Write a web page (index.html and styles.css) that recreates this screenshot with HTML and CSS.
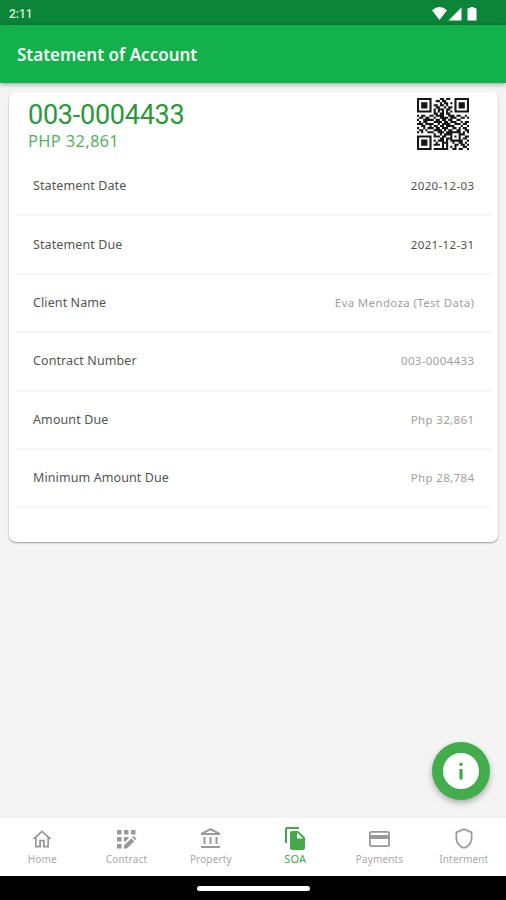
FILE: index.html
```html
<!DOCTYPE html>
<html lang="en">
<head>
<meta charset="utf-8">
<title>Statement of Account</title>
<link rel="stylesheet" href="styles.css">
</head>
<body>
<div class="screen">
  <div class="status">
    <span class="clock">2:11</span>
    <svg class="status-icons" width="46" height="16" viewBox="0 0 46 16" fill="#fff">
      <path d="M0 4.2Q7.5 -2 15 4.2L7.500 14Z"/>
      <path d="M16.500 14.500L29.500 1.500V14.500Z"/>
      <path d="M38 1h4v1.300h2.500V14.500h-9V2.300H38Z"/>
    </svg>
  </div>
  <header class="appbar"><h1>Statement of Account</h1></header>
  <main class="content">
    <section class="card">
      <div class="summary">
        <div>
          <div class="account">003-0004433</div>
          <div class="total">PHP 32,861</div>
        </div>
        <svg class="qr" width="52" height="52" viewBox="0 0 25 25" aria-label="QR code"><path id="modules"/></svg>
      </div>
      <div class="rows">
        <div class="row dark"><span class="label">Statement Date</span><span class="value">2020-12-03</span></div>
        <div class="row dark"><span class="label">Statement Due</span><span class="value">2021-12-31</span></div>
        <div class="row"><span class="label">Client Name</span><span class="value">Eva Mendoza (Test Data)</span></div>
        <div class="row"><span class="label">Contract Number</span><span class="value">003-0004433</span></div>
        <div class="row"><span class="label">Amount Due</span><span class="value">Php 32,861</span></div>
        <div class="row"><span class="label">Minimum Amount Due</span><span class="value">Php 28,784</span></div>
      </div>
    </section>
    <button class="fab" aria-label="Information">
      <svg width="36" height="36" viewBox="0 0 36 36"><circle cx="18" cy="18" r="18" fill="#fff"/><circle cx="18" cy="11.200" r="1.800" fill="#43a94a"/><path d="M16.400 16h3.200v10.500h-3.200z" fill="#43a94a"/></svg>
    </button>
  </main>
  <nav class="tabs">
    <a class="tab"><svg viewBox="1 1 22 22"><path d="M12 3.200L2.200 12H5v8.500h6v-6h2v6h6V12h2.800zM12 5.600l5.300 4.800v8.400h-2.500v-6H9.200v6H6.700v-8.400z"/></svg><span>Home</span></a>
    <a class="tab"><svg viewBox="1 1 22 22"><path d="M3 3h4.500v4.500H3zM10 3h4.500v4.500H10zM17 3h4.500v4.500H17zM3 10h4.500v4.500H3zM3 17h4.500v4.500H3zM10 10h4.500v1.500l-3 3H10zM10 21.500v-3l7.300-7.300 3 3-7.300 7.300zM18.200 10.300l1-1q.5-.5 1 0l1.900 1.900q.5.5 0 1l-1 1z"/></svg><span>Contract</span></a>
    <a class="tab"><svg class="large" viewBox="0 0 24 24"><path d="M6.500 10h-2v7h2v-7zm6 0h-2v7h2v-7zm8.500 9H2v2h19v-2zm-2.500-9h-2v7h2v-7zm-7-6.740L16.710 6H6.290l5.210-2.740m0-2.260L2 6v2h19V6l-9.500-5z"/></svg><span>Property</span></a>
    <a class="tab active"><svg class="large" viewBox="0 0 24 24"><path d="M16 0H4C2.900 0 2 .9 2 2v14h2V2h12zM15 4l7 6.500V21q0 2-2 2H9q-2 0-2-2V6q0-2 2-2zm-1 7.500h6L14 5.500z"/></svg><span>SOA</span></a>
    <a class="tab"><svg class="large" viewBox="0 0 24 24"><path d="M20.500 4h-16C3 4 2 4.900 2 6v12c0 1.100 1 2 2.500 2h16c1.500 0 2.500-.9 2.500-2V6c0-1.100-1-2-2.500-2zm.7 14.300H3.800V12h17.400zm0-10.300H3.800V5.700h17.400z"/></svg><span>Payments</span></a>
    <a class="tab"><svg class="large" viewBox="0 0 24 24"><path d="M12 1.200L3.500 4.700v6c0 5.300 3.600 9.800 8.500 11.100 4.900-1.300 8.500-5.800 8.500-11.100v-6zM12 3.100l6.800 2.800v4.800c0 4.300-2.900 8.100-6.800 9.300-3.900-1.200-6.800-5-6.800-9.300V5.900z"/></svg><span>Interment</span></a>
  </nav>
  <div class="gesture"><div class="handle"></div></div>
</div>
<script src="qr.js"></script>
</body>
</html>
```
FILE: styles.css
```css
* { box-sizing: border-box; }
body { margin: 0; font-family: "Noto Sans", "Open Sans", sans-serif; background: #f4f4f4; }
.screen { width: 506px; height: 900px; display: flex; flex-direction: column; overflow: hidden; }
.status { height: 25px; flex: none; background: #0d8538; display: flex; justify-content: space-between; align-items: center; padding: 2px 28px 0 9px; }
.clock { font: 500 12px/16px Roboto, sans-serif; color: #d9efdd; letter-spacing: 0; }
.appbar { height: 58px; flex: none; background: #13b14b; display: flex; align-items: center; padding: 1px 17px 0; box-shadow: 0 1px 5px rgba(0,0,0,.4); z-index: 1; }
.appbar h1 { margin: 0; font-size: 17px; line-height: 24px; font-weight: 600; color: #f4fff6; white-space: nowrap; }
.content { flex: 1; display: flex; flex-direction: column; justify-content: space-between; padding: 9px 8px 17px 9px; background: #f4f4f4; }
.card { height: 450px; background: #fff; border-radius: 7px; box-shadow: 0 1px 2px rgba(0,0,0,.38); padding: 5px 6px 0 7px; }
.summary { height: 61px; display: flex; justify-content: space-between; padding: 1px 23px 0 12px; }
.account { font: 400 27px/32px Roboto, sans-serif; color: #2a983a; letter-spacing: -.25px; white-space: nowrap; padding-top: 1px; }
.total { font-size: 16.500px; line-height: 20px; color: #58b360; white-space: nowrap; letter-spacing: .3px; }
.qr { display: block; fill: #161616; }
.row { height: 58.400px; border-bottom: 2px solid #f7f7f7; padding: 0 18px 1px 17px; display: flex; align-items: center; justify-content: space-between; font-size: 12.500px; white-space: nowrap; }
.label { color: #555; letter-spacing: .1px; }
.value { color: #a0a0a0; font-size: 11.500px; letter-spacing: .35px; margin-right: -.35px; }
.dark .value { color: #505050; }
.fab { align-self: flex-end; width: 58px; height: 58px; margin-right: 8px; padding: 0; border: 0; border-radius: 50%; background: #43ad4b; display: flex; align-items: center; justify-content: center; box-shadow: 0 3px 6px rgba(0,0,0,.3); }
.tabs { height: 59px; flex: none; background: #fff; border-top: 1px solid #eee; display: flex; }
.tab { flex: 1; display: flex; flex-direction: column; align-items: center; color: #a8a8a8; font-size: 10px; line-height: 14px; padding-top: 9px; letter-spacing: .15px; }
.tab svg { width: 22px; height: 24px; padding: 1px 0; fill: #999; }
.tab svg.large { width: 24px; padding: 0; }
.tab span { margin-top: 1px; }
.tab.active { color: #43a94a; font-size: 11px; }
.tab.active svg { fill: #43a94a; }
.gesture { height: 24px; flex: none; background: #000; display: flex; justify-content: center; align-items: center; }
.handle { width: 113px; height: 5px; border-radius: 3px; background: #fff; }
```
FILE: qr.js
```js
const rows = [
  "1111111000011011001111111",
  "1000001001101100001000001",
  "1011101000010110101011101",
  "1011101011011010001011101",
  "1011101001100101101011101",
  "1000001010111011001000001",
  "1111111010101010101111111",
  "0000000011011011000000000",
  "1011001101111001110110010",
  "0110110010011110111001101",
  "1001111101101101100110000",
  "0101100011110110111001011",
  "1110111100101111001110110",
  "0011001011011011110001001",
  "1001011101101110011010110",
  "0110100011110101100110011",
  "1010011100111011111110101",
  "0000000010010111100011100",
  "1111111011101100101010011",
  "1000001000011011100010110",
  "1011101010111010111111001",
  "1011101001001110010011010",
  "1011101011101010001101101",
  "1000001000001010101000110",
  "1111111011111110011011001"
];
document.getElementById("modules").setAttribute("d",
  rows.map((r, y) => [...r].map((c, x) => c === "1" ? `M${x} ${y}h1v1h-1z` : "").join("")).join(""));
```
